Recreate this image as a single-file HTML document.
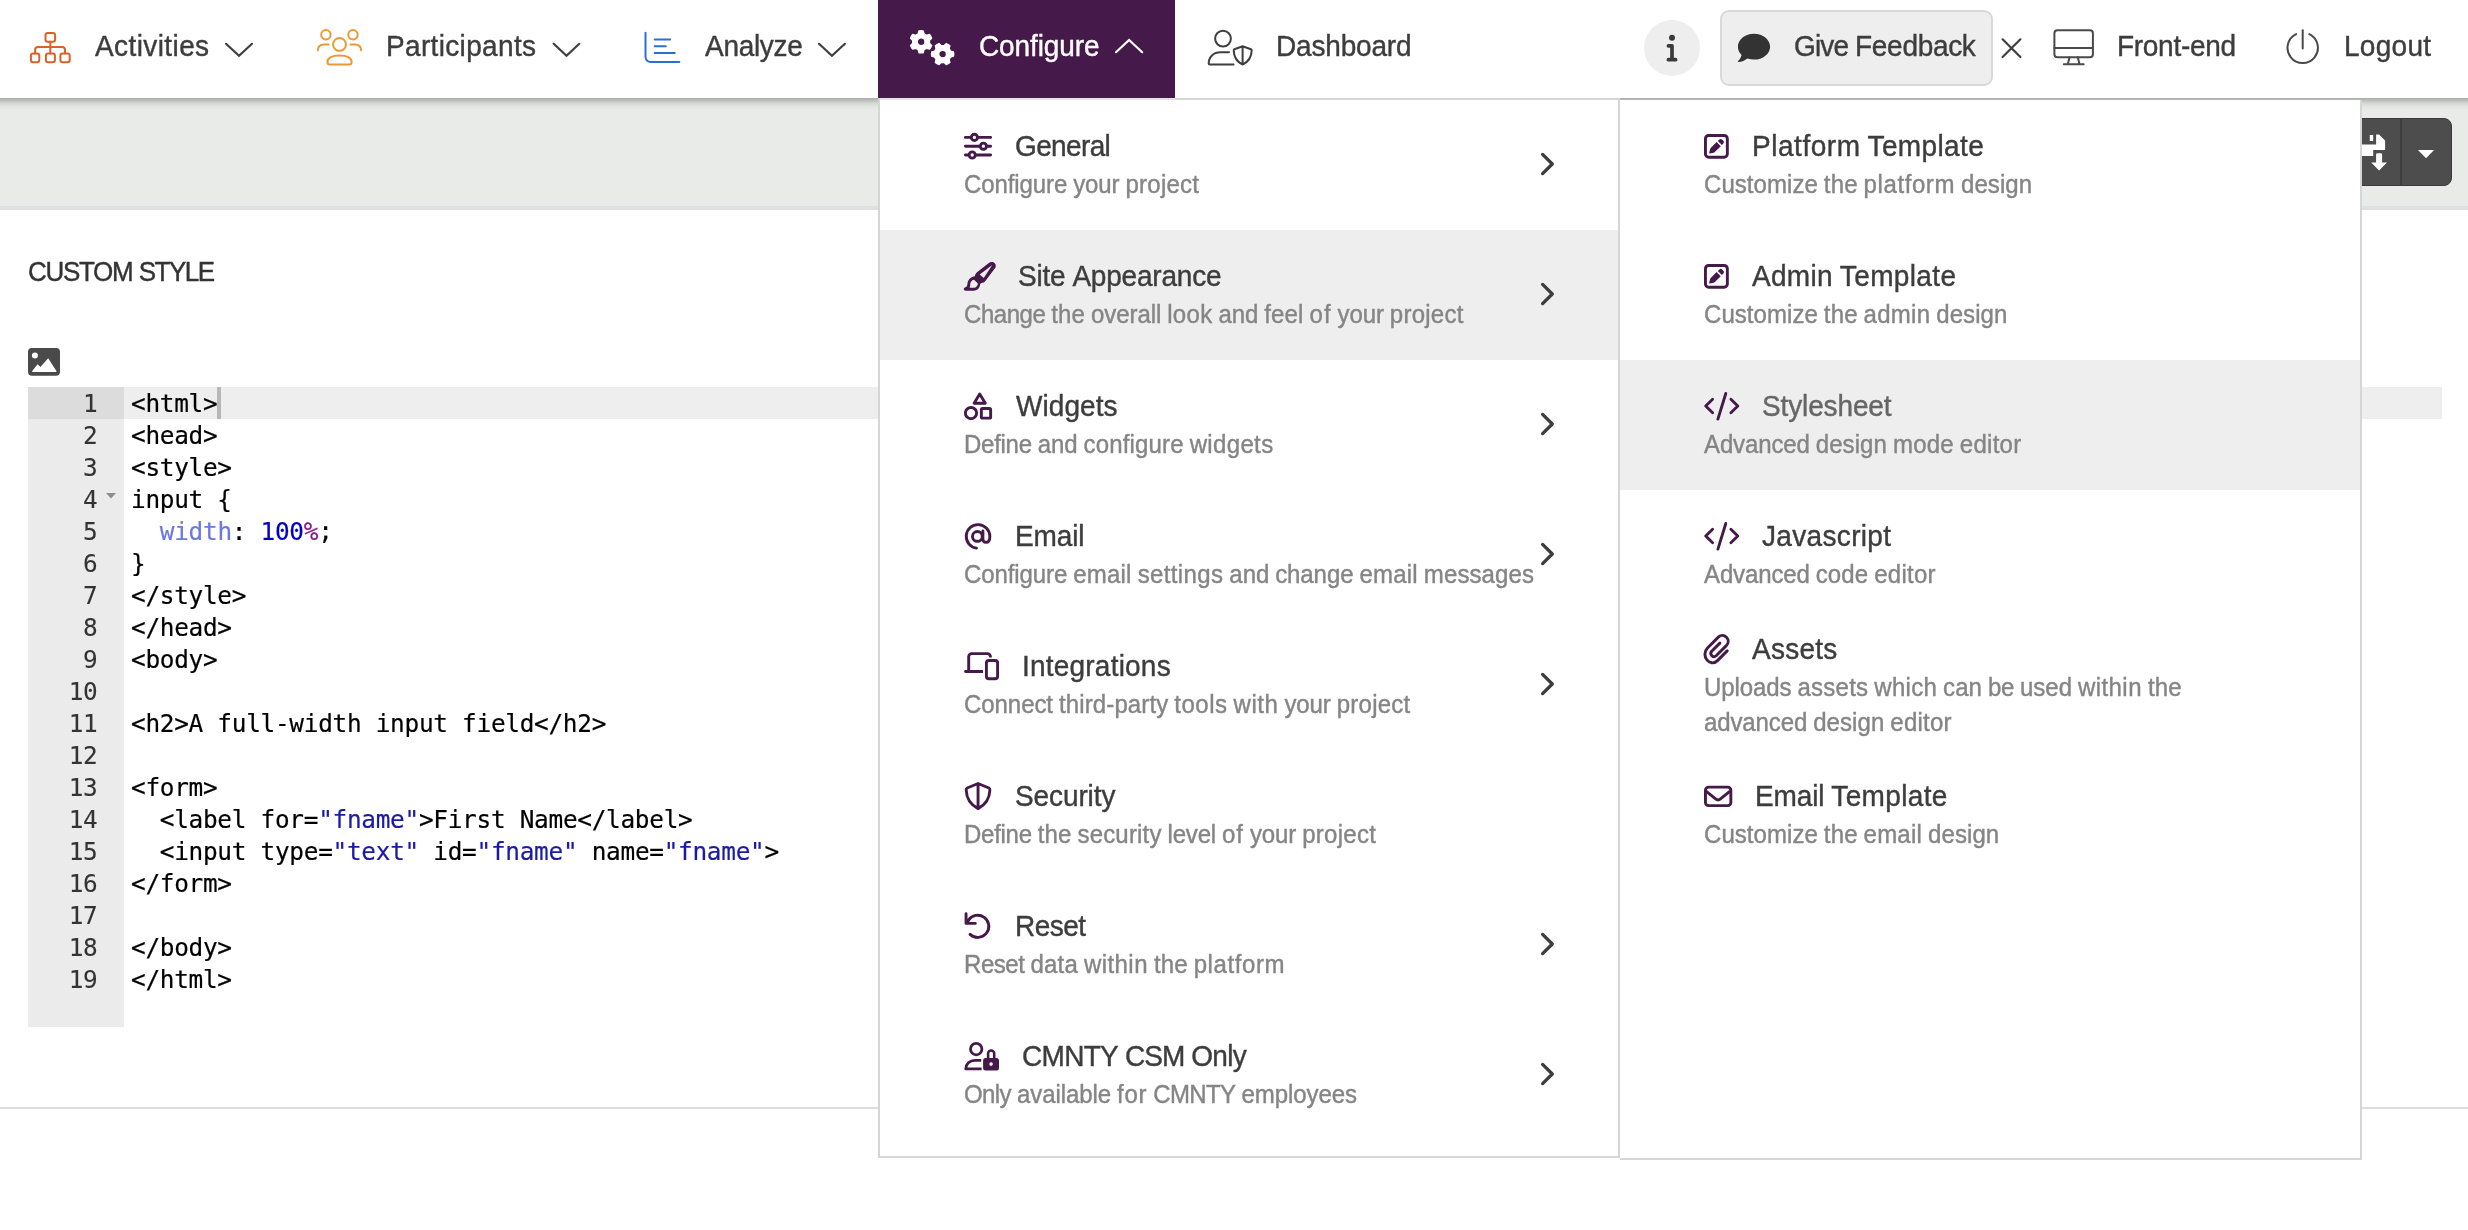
<!DOCTYPE html>
<html lang="en"><head><meta charset="utf-8"><title>Custom style</title>
<style>
html,body{margin:0;padding:0}
body{width:2468px;height:1230px;position:relative;overflow:hidden;background:#fff;font-family:"Liberation Sans",sans-serif;color:#3d3d3d}
.t{position:absolute;white-space:nowrap;line-height:1;will-change:transform;transform:scaleY(1.035);transform-origin:0 84%;-webkit-text-stroke:0.4px currentColor}
.b{position:absolute}
svg{position:absolute;overflow:visible}
.code{position:absolute;white-space:pre;font-family:"DejaVu Sans Mono","Liberation Mono",monospace;font-size:24.4px;letter-spacing:-0.289px;line-height:32px;color:#000;height:32px;will-change:transform;-webkit-text-stroke:0.2px currentColor}
.ln{position:absolute;left:28px;width:69.5px;text-align:right;font-family:"DejaVu Sans Mono","Liberation Mono",monospace;font-size:24.4px;letter-spacing:-0.289px;line-height:32px;color:#333;height:32px;will-change:transform;-webkit-text-stroke:0.1px currentColor}
.s{color:#1a1aa6} .p{color:#6d79de} .n{color:#0000cd} .u{color:#8b1a8b}
</style></head>
<body>

<!-- page background pieces -->
<div class="b" style="left:0;top:98px;width:2468px;height:108px;background:#e9ebe9"></div>
<div class="b" style="left:0;top:206px;width:2468px;height:4px;background:#dfe0e3"></div>
<div class="b" style="left:0;top:98px;width:2468px;height:13px;background:linear-gradient(#acaeac,#b9bbb9 15%,#d2d4d2 38%,#dfe1df 58%,#e6e8e6 77%,#e9ebe9)"></div>
<div class="b" style="left:0;top:1107px;width:2468px;height:2px;background:#dddee1"></div>
<!-- save button on right -->
<div class="b" style="left:2330px;top:118px;width:122px;height:68px;box-sizing:border-box;background:#4d4d4d;border:1.5px solid #3a3a3a;border-radius:8px"></div>
<div class="b" style="left:2400px;top:118px;width:2px;height:68px;background:#3e3e3e"></div>
<div class="b" style="left:28px;top:387px;width:96px;height:640px;background:#ebebeb"></div>
<div class="b" style="left:124px;top:387px;width:2318px;height:32px;background:#eee"></div>
<div class="b" style="left:28px;top:387px;width:96px;height:32px;background:#dcdcdc"></div>
<div class="b" style="left:217.2px;top:387px;width:3.7px;height:32px;background:#b7b7b7"></div>
<div class="ln" style="top:388px">1</div>
<div class="code" style="left:131.3px;top:388px">&lt;html&gt;</div>
<div class="ln" style="top:420px">2</div>
<div class="code" style="left:131.3px;top:420px">&lt;head&gt;</div>
<div class="ln" style="top:452px">3</div>
<div class="code" style="left:131.3px;top:452px">&lt;style&gt;</div>
<div class="ln" style="top:484px">4</div>
<div class="code" style="left:131.3px;top:484px">input {</div>
<div class="ln" style="top:516px">5</div>
<div class="code" style="left:131.3px;top:516px">  <span class="p">width</span>: <span class="n">100</span><span class="u">%</span>;</div>
<div class="ln" style="top:548px">6</div>
<div class="code" style="left:131.3px;top:548px">}</div>
<div class="ln" style="top:580px">7</div>
<div class="code" style="left:131.3px;top:580px">&lt;/style&gt;</div>
<div class="ln" style="top:612px">8</div>
<div class="code" style="left:131.3px;top:612px">&lt;/head&gt;</div>
<div class="ln" style="top:644px">9</div>
<div class="code" style="left:131.3px;top:644px">&lt;body&gt;</div>
<div class="ln" style="top:676px">10</div>
<div class="ln" style="top:708px">11</div>
<div class="code" style="left:131.3px;top:708px">&lt;h2&gt;A full-width input field&lt;/h2&gt;</div>
<div class="ln" style="top:740px">12</div>
<div class="ln" style="top:772px">13</div>
<div class="code" style="left:131.3px;top:772px">&lt;form&gt;</div>
<div class="ln" style="top:804px">14</div>
<div class="code" style="left:131.3px;top:804px">  &lt;label for=<span class="s">"fname"</span>&gt;First Name&lt;/label&gt;</div>
<div class="ln" style="top:836px">15</div>
<div class="code" style="left:131.3px;top:836px">  &lt;input type=<span class="s">"text"</span> id=<span class="s">"fname"</span> name=<span class="s">"fname"</span>&gt;</div>
<div class="ln" style="top:868px">16</div>
<div class="code" style="left:131.3px;top:868px">&lt;/form&gt;</div>
<div class="ln" style="top:900px">17</div>
<div class="ln" style="top:932px">18</div>
<div class="code" style="left:131.3px;top:932px">&lt;/body&gt;</div>
<div class="ln" style="top:964px">19</div>
<div class="code" style="left:131.3px;top:964px">&lt;/html&gt;</div>
<svg style="left:105px;top:492px" width="12" height="8" viewBox="0 0 12 8"><path d="M1 1h10L6 6.5z" fill="#8c8c8c"/></svg>
<!-- nav -->
<div class="b" style="left:0;top:0;width:2468px;height:98px;background:#fff"></div>
<div class="b" style="left:878px;top:0;width:297px;height:98px;background:#45194a"></div>
<div class="b" style="left:1644px;top:20px;width:56px;height:56px;border-radius:50%;background:#eee"></div>
<div class="b" style="left:1720px;top:10px;width:269px;height:72px;border:2px solid #d9d9d9;border-radius:9px;background:#eee"></div>
<!-- dropdown panels -->
<div class="b" style="left:878px;top:98px;width:742px;height:1060px;background:#fff"></div>
<div class="b" style="left:1620px;top:100px;width:742px;height:1060px;background:#fff"></div>
<div class="b" style="left:878px;top:98px;width:742px;height:2px;background:#d6d6d6"></div>
<div class="b" style="left:880px;top:98px;width:295px;height:2px;background:#e3e6e3"></div>
<div class="b" style="left:878px;top:98px;width:2px;height:1060px;background:#d5d5d5"></div>
<div class="b" style="left:878px;top:1156px;width:742px;height:2px;background:#d7d7d7"></div>
<div class="b" style="left:1618px;top:100px;width:2px;height:1058px;background:#d6d6d6"></div>
<div class="b" style="left:2360px;top:100px;width:2px;height:1060px;background:#d6d6d6"></div>
<div class="b" style="left:1620px;top:1158px;width:742px;height:2px;background:#d7d7d7"></div>
<div class="b" style="left:880px;top:230px;width:738px;height:130px;background:#eee"></div>
<div class="b" style="left:1620px;top:360px;width:740px;height:130px;background:#eee"></div>

<div class="t" style="left:95.0px;top:33.2px;font-size:28px;color:#3d3d3d;word-spacing:-0.844px"><span style="letter-spacing:0.406px">Activities</span></div>
<div class="t" style="left:385.8px;top:33.2px;font-size:28px;color:#3d3d3d;word-spacing:-0.844px"><span style="letter-spacing:0.341px">Participants</span></div>
<div class="t" style="left:704.6px;top:33.2px;font-size:28px;color:#3d3d3d;word-spacing:-0.844px"><span style="letter-spacing:-0.297px">Analyze</span></div>
<div class="t" style="left:978.6px;top:33.2px;font-size:28px;color:#fff;word-spacing:-0.844px"><span style="letter-spacing:-0.109px">Configure</span></div>
<div class="t" style="left:1275.6px;top:33.2px;font-size:28px;color:#3d3d3d;word-spacing:-0.844px"><span style="letter-spacing:-0.174px">Dashboard</span></div>
<div class="t" style="left:1793.6px;top:33.2px;font-size:28px;color:#3d3d3d;word-spacing:-0.844px"><span style="letter-spacing:-0.863px">Give</span> <span style="letter-spacing:-0.311px">Feedback</span></div>
<div class="t" style="left:2117.3px;top:33.2px;font-size:28px;color:#3d3d3d;word-spacing:-0.844px"><span style="letter-spacing:-0.292px">Front-end</span></div>
<div class="t" style="left:2343.9px;top:33.2px;font-size:28px;color:#3d3d3d;word-spacing:-0.844px"><span style="letter-spacing:0.284px">Logout</span></div>
<div class="t" style="left:28.1px;top:258.8px;font-size:26px;color:#333;word-spacing:-0.797px"><span style="letter-spacing:-1.326px">CUSTOM</span> <span style="letter-spacing:-1.482px">STYLE</span></div>
<div class="t" style="left:1015.1px;top:133.3px;font-size:28px;color:#3d3d3d;word-spacing:-0.844px"><span style="letter-spacing:-0.629px">General</span></div>
<div class="t" style="left:964.2px;top:172.7px;font-size:24px;color:#858585;word-spacing:-0.719px"><span style="letter-spacing:-0.094px">Configure</span> <span style="letter-spacing:-0.113px">your</span> <span style="letter-spacing:0.272px">project</span></div>
<div class="t" style="left:1017.8px;top:263.3px;font-size:28px;color:#3d3d3d;word-spacing:-0.844px"><span style="letter-spacing:-0.199px">Site</span> <span style="letter-spacing:-0.208px">Appearance</span></div>
<div class="t" style="left:964.2px;top:302.7px;font-size:24px;color:#858585;word-spacing:-0.719px"><span style="letter-spacing:-0.453px">Change</span> <span style="letter-spacing:0.141px">the</span> <span style="letter-spacing:-0.085px">overall</span> <span style="letter-spacing:0.336px">look</span> <span style="letter-spacing:-0.068px">and</span> <span style="letter-spacing:0.164px">feel</span> <span style="letter-spacing:1.008px">of</span> <span style="letter-spacing:-0.113px">your</span> <span style="letter-spacing:0.272px">project</span></div>
<div class="t" style="left:1015.5px;top:393.3px;font-size:28px;color:#3d3d3d;word-spacing:-0.844px"><span style="letter-spacing:0.067px">Widgets</span></div>
<div class="t" style="left:964.0px;top:432.7px;font-size:24px;color:#858585;word-spacing:-0.719px"><span style="letter-spacing:-0.268px">Define</span> <span style="letter-spacing:-0.068px">and</span> <span style="letter-spacing:0.158px">configure</span> <span style="letter-spacing:0.355px">widgets</span></div>
<div class="t" style="left:1014.8px;top:523.3px;font-size:28px;color:#3d3d3d;word-spacing:-0.844px"><span style="letter-spacing:-0.138px">Email</span></div>
<div class="t" style="left:964.2px;top:562.7px;font-size:24px;color:#858585;word-spacing:-0.719px"><span style="letter-spacing:-0.094px">Configure</span> <span style="letter-spacing:0.228px">email</span> <span style="letter-spacing:0.383px">settings</span> <span style="letter-spacing:-0.068px">and</span> <span style="letter-spacing:-0.076px">change</span> <span style="letter-spacing:0.228px">email</span> <span style="letter-spacing:0.102px">messages</span></div>
<div class="t" style="left:1021.7px;top:653.3px;font-size:28px;color:#3d3d3d;word-spacing:-0.844px"><span style="letter-spacing:0.210px">Integrations</span></div>
<div class="t" style="left:964.2px;top:692.7px;font-size:24px;color:#858585;word-spacing:-0.719px"><span style="letter-spacing:-0.060px">Connect</span> <span style="letter-spacing:0.128px">third-party</span> <span style="letter-spacing:0.503px">tools</span> <span style="letter-spacing:0.566px">with</span> <span style="letter-spacing:-0.113px">your</span> <span style="letter-spacing:0.272px">project</span></div>
<div class="t" style="left:1014.6px;top:783.3px;font-size:28px;color:#3d3d3d;word-spacing:-0.844px"><span style="letter-spacing:-0.109px">Security</span></div>
<div class="t" style="left:964.0px;top:822.7px;font-size:24px;color:#858585;word-spacing:-0.719px"><span style="letter-spacing:-0.268px">Define</span> <span style="letter-spacing:0.141px">the</span> <span style="letter-spacing:0.176px">security</span> <span style="letter-spacing:-0.181px">level</span> <span style="letter-spacing:1.008px">of</span> <span style="letter-spacing:-0.113px">your</span> <span style="letter-spacing:0.272px">project</span></div>
<div class="t" style="left:1014.8px;top:913.3px;font-size:28px;color:#3d3d3d;word-spacing:-0.844px"><span style="letter-spacing:-0.519px">Reset</span></div>
<div class="t" style="left:964.0px;top:952.7px;font-size:24px;color:#858585;word-spacing:-0.719px"><span style="letter-spacing:-0.444px">Reset</span> <span style="letter-spacing:0.195px">data</span> <span style="letter-spacing:0.445px">within</span> <span style="letter-spacing:0.141px">the</span> <span style="letter-spacing:0.592px">platform</span></div>
<div class="t" style="left:1022.0px;top:1043.3px;font-size:28px;color:#3d3d3d;word-spacing:-0.844px"><span style="letter-spacing:-0.709px">CMNTY</span> <span style="letter-spacing:-0.979px">CSM</span> <span style="letter-spacing:-0.695px">Only</span></div>
<div class="t" style="left:964.3px;top:1082.7px;font-size:24px;color:#858585;word-spacing:-0.719px"><span style="letter-spacing:-0.598px">Only</span> <span style="letter-spacing:-0.064px">available</span> <span style="letter-spacing:0.719px">for</span> <span style="letter-spacing:-0.609px">CMNTY</span> <span style="letter-spacing:-0.047px">employees</span></div>
<div class="t" style="left:1751.5px;top:133.3px;font-size:28px;color:#3d3d3d;word-spacing:-0.844px"><span style="letter-spacing:0.545px">Platform</span> <span style="letter-spacing:0.363px">Template</span></div>
<div class="t" style="left:1704.2px;top:172.7px;font-size:24px;color:#858585;word-spacing:-0.719px"><span style="letter-spacing:0.056px">Customize</span> <span style="letter-spacing:0.141px">the</span> <span style="letter-spacing:0.592px">platform</span> <span style="letter-spacing:0.081px">design</span></div>
<div class="t" style="left:1751.8px;top:263.3px;font-size:28px;color:#3d3d3d;word-spacing:-0.844px"><span style="letter-spacing:0.303px">Admin</span> <span style="letter-spacing:0.363px">Template</span></div>
<div class="t" style="left:1704.2px;top:302.7px;font-size:24px;color:#858585;word-spacing:-0.719px"><span style="letter-spacing:0.056px">Customize</span> <span style="letter-spacing:0.141px">the</span> <span style="letter-spacing:0.272px">admin</span> <span style="letter-spacing:0.081px">design</span></div>
<div class="t" style="left:1761.9px;top:393.3px;font-size:28px;color:#666;word-spacing:-0.844px"><span style="letter-spacing:-0.133px">Stylesheet</span></div>
<div class="t" style="left:1704.3px;top:432.7px;font-size:24px;color:#858585;word-spacing:-0.719px"><span style="letter-spacing:-0.121px">Advanced</span> <span style="letter-spacing:0.081px">design</span> <span style="letter-spacing:0.238px">mode</span> <span style="letter-spacing:0.250px">editor</span></div>
<div class="t" style="left:1762.4px;top:523.3px;font-size:28px;color:#3d3d3d;word-spacing:-0.844px"><span style="letter-spacing:0.331px">Javascript</span></div>
<div class="t" style="left:1704.3px;top:562.7px;font-size:24px;color:#858585;word-spacing:-0.719px"><span style="letter-spacing:-0.121px">Advanced</span> <span style="letter-spacing:0.117px">code</span> <span style="letter-spacing:0.250px">editor</span></div>
<div class="t" style="left:1751.8px;top:636.3px;font-size:28px;color:#3d3d3d;word-spacing:-0.844px"><span style="letter-spacing:0.268px">Assets</span></div>
<div class="t" style="left:1703.8px;top:675.7px;font-size:24px;color:#858585;word-spacing:-0.719px"><span style="letter-spacing:-0.074px">Uploads</span> <span style="letter-spacing:0.237px">assets</span> <span style="letter-spacing:0.303px">which</span> <span style="letter-spacing:0.057px">can</span> <span style="letter-spacing:-0.250px">be</span> <span style="letter-spacing:-0.039px">used</span> <span style="letter-spacing:0.445px">within</span> <span style="letter-spacing:0.141px">the</span></div>
<div class="t" style="left:1704.3px;top:710.7px;font-size:24px;color:#858585;word-spacing:-0.719px"><span style="letter-spacing:-0.115px">advanced</span> <span style="letter-spacing:0.081px">design</span> <span style="letter-spacing:0.250px">editor</span></div>
<div class="t" style="left:1755.0px;top:783.3px;font-size:28px;color:#3d3d3d;word-spacing:-0.844px"><span style="letter-spacing:-0.138px">Email</span> <span style="letter-spacing:0.363px">Template</span></div>
<div class="t" style="left:1704.2px;top:822.7px;font-size:24px;color:#858585;word-spacing:-0.719px"><span style="letter-spacing:0.056px">Customize</span> <span style="letter-spacing:0.141px">the</span> <span style="letter-spacing:0.228px">email</span> <span style="letter-spacing:0.081px">design</span></div>
<svg style="left:0;top:0" width="2468" height="1230" viewBox="0 0 2468 1230">
<g stroke="#d9622b" stroke-width="2" fill="none" stroke-linecap="round" stroke-linejoin="round">
<rect x="45.5" y="33" width="9.6" height="8.7" rx="2.2"/>
<rect x="30.9" y="53.4" width="8.4" height="8.8" rx="2.2"/>
<rect x="45.9" y="53.4" width="9" height="8.8" rx="2.2"/>
<rect x="60.4" y="53.4" width="9.3" height="8.8" rx="2.2"/>
<path d="M50.3 41.7V53.4M35.1 53.4V50a3 3 0 0 1 3-3H62a3 3 0 0 1 3 3V53.4"/></g>
<path d="M226 43.8 L239.0 55.699999999999996 L252 43.8" stroke="#3f3f3f" stroke-width="2.2" fill="none" stroke-linecap="round" stroke-linejoin="miter"/>
<g stroke="#ea9a34" stroke-width="2" fill="none" stroke-linecap="round" stroke-linejoin="round">
<circle cx="325.9" cy="34.8" r="4.7"/><circle cx="353" cy="34.8" r="4.7"/><circle cx="339.5" cy="44.4" r="6.4"/>
<path d="M317.9 50.3C318 46.6 320.6 44.6 324 44.6H328.6M361.1 50.3C361 46.6 358.4 44.6 355 44.6H350.4"/>
<path d="M327.4 62C327.4 58 332 55.4 339.5 55.4S351.6 58 351.6 62a2.5 2.5 0 0 1-2.5 2.5H329.9a2.5 2.5 0 0 1-2.5-2.5z"/></g>
<path d="M553.7 43.8 L566.5 55.699999999999996 L579.3 43.8" stroke="#3f3f3f" stroke-width="2.2" fill="none" stroke-linecap="round" stroke-linejoin="miter"/>
<g stroke="#2c6fd3" stroke-width="2" fill="none" stroke-linecap="round" stroke-linejoin="round">
<path d="M645.5 32.8V57a5 5 0 0 0 5 5H679.3"/>
<path d="M654.7 39.6H670.2M654.7 46.2H665.8M654.7 53.1H674.8"/></g>
<path d="M819 43.8 L831.95 55.699999999999996 L844.9 43.8" stroke="#3f3f3f" stroke-width="2.2" fill="none" stroke-linecap="round" stroke-linejoin="miter"/>
<path d="M924.03 49.67L923.18 52.70A11.10 11.10 0 0 1 919.02 52.70L918.17 49.67A8.40 8.40 0 0 1 915.75 48.27L912.70 49.05A11.10 11.10 0 0 1 910.62 45.45L912.82 43.20A8.40 8.40 0 0 1 912.82 40.40L910.62 38.15A11.10 11.10 0 0 1 912.70 34.55L915.75 35.33A8.40 8.40 0 0 1 918.17 33.93L919.02 30.90A11.10 11.10 0 0 1 923.18 30.90L924.03 33.93A8.40 8.40 0 0 1 926.45 35.33L929.50 34.55A11.10 11.10 0 0 1 931.58 38.15L929.38 40.40A8.40 8.40 0 0 1 929.38 43.20L931.58 45.45A11.10 11.10 0 0 1 929.50 49.05L926.45 48.27A8.40 8.40 0 0 1 924.03 49.67ZM925.00 41.80A3.9 3.9 0 1 0 917.20 41.80A3.9 3.9 0 1 0 925.00 41.80ZM950.47 51.17L953.50 52.02A11.10 11.10 0 0 1 953.50 56.18L950.47 57.03A8.40 8.40 0 0 1 949.07 59.45L949.85 62.50A11.10 11.10 0 0 1 946.25 64.58L944.00 62.38A8.40 8.40 0 0 1 941.20 62.38L938.95 64.58A11.10 11.10 0 0 1 935.35 62.50L936.13 59.45A8.40 8.40 0 0 1 934.73 57.03L931.70 56.18A11.10 11.10 0 0 1 931.70 52.02L934.73 51.17A8.40 8.40 0 0 1 936.13 48.75L935.35 45.70A11.10 11.10 0 0 1 938.95 43.62L941.20 45.82A8.40 8.40 0 0 1 944.00 45.82L946.25 43.62A11.10 11.10 0 0 1 949.85 45.70L949.07 48.75A8.40 8.40 0 0 1 950.47 51.17ZM946.50 54.10A3.9 3.9 0 1 0 938.70 54.10A3.9 3.9 0 1 0 946.50 54.10Z" fill="#fff" fill-rule="evenodd" stroke="#fff" stroke-width="1.4" stroke-linejoin="round"/>
<path d="M1116 52.2 L1129.1 39.9 L1142.2 52.2" stroke="#fff" stroke-width="2.2" fill="none" stroke-linecap="round"/>
<g stroke="#3f3f3f" stroke-width="2" fill="none" stroke-linecap="round" stroke-linejoin="round">
<circle cx="1223" cy="38.6" r="7.9"/>
<path d="M1229 52.3H1220.5C1213.5 52.3 1208.7 57 1208.7 63.5a1 1 0 0 0 1 1H1233.5"/>
<path d="M1242.6 46.3L1234.4 49.3C1233.9 49.5 1233.7 49.9 1233.7 50.4C1233.9 57 1237.2 62 1242.6 64.6C1248 62 1251.5 57 1251.7 50.4C1251.7 49.9 1251.4 49.5 1250.9 49.3ZM1242.6 46.3V64.6"/></g>
<circle cx="1672" cy="37.8" r="3" fill="#3b3b3b"/><path d="M1668.4 45.8H1672V59.7M1668.4 59.7H1675.6" stroke="#3b3b3b" stroke-width="3.7" fill="none" stroke-linecap="round" stroke-linejoin="round"/>
<path d="M1754 33.8C1762.9 33.8 1770.1 39.6 1770.1 46.7S1762.9 59.6 1754 59.6C1751.6 59.6 1749.4 59.2 1747.4 58.5C1745 60.5 1741.8 61.9 1738.3 61.9C1737.8 61.9 1737.7 61.4 1738 61.1C1739.5 59.6 1741 57.4 1741.6 54.9C1739.3 52.7 1737.9 49.8 1737.9 46.7C1737.9 39.6 1745.1 33.8 1754 33.8Z" fill="#333"/>
<path d="M2002.6 39.3L2020.4 57M2020.4 39.3L2002.6 57" stroke="#3f3f3f" stroke-width="2.2" fill="none" stroke-linecap="round"/>
<g stroke="#4a4a4a" stroke-width="2" fill="none" stroke-linecap="round" stroke-linejoin="round">
<rect x="2054.4" y="30.3" width="38.5" height="26.9" rx="3"/>
<path d="M2054.4 47.9H2092.9M2069.5 57.2L2067.8 64.3M2077.8 57.2L2079.5 64.3M2063.8 64.3H2083.7"/></g>
<g stroke="#4a4a4a" stroke-width="2" fill="none" stroke-linecap="round">
<path d="M2302.7 30.3V48.5"/>
<path d="M2309.3 34.1A15.2 15.2 0 1 1 2296.1 34.1"/></g>
<g stroke="#45194a" stroke-width="2.9" fill="none" stroke-linecap="round"><path d="M965.4 137.4H970.0M978.8 137.4H990.6" /><circle cx="974.4" cy="137.4" r="3.1"/><path d="M965.4 146.2H979.0M987.8 146.2H990.6" /><circle cx="983.4" cy="146.2" r="3.1"/><path d="M965.4 155H967.8000000000001M976.6 155H990.6" /><circle cx="972.2" cy="155" r="3.1"/></g>
<path fill="#45194a" fill-rule="evenodd" d="M991.9 262C994.6 262 996.6 264.6 995.5 267.4L985.6 280.7C984.5 282.1 983 282.9 981.6 283C980.6 283.4 980.2 284 980 285C979.5 288.5 977 290.65 973.5 290.65H965.6C964.5 290.65 963.8 289.9 963.8 289C963.8 288 964.5 287.5 965.4 287.2C967 286.8 967.3 285.5 967.4 284C967.8 279.5 971 276.8 974.8 276.3C975 274.8 975.6 273.5 977 272.3L988.5 263.2C989.5 262.4 990.7 262 991.9 262Z
M992.3 265.1L979.7 274.5L983.7 278.1Z
M974 279.7C971.5 280.2 970.3 282 970.2 284.5C970.1 286 970 287 969.6 287.8H974C976 287.8 977.6 286.3 977.9 283.6Z"/>
<g stroke="#45194a" stroke-width="2.9" fill="none" stroke-linejoin="round">
<path d="M979.7 393.9L985.3 403.3H974.1Z"/><circle cx="971" cy="413.1" r="5.65"/><rect x="981.35" y="408.45" width="9.3" height="9.7" rx="1.2"/></g>
<g stroke="#45194a" stroke-width="2.9" fill="none" stroke-linecap="round" stroke-linejoin="round">
<circle cx="977.4" cy="536.4" r="4.9"/>
<path d="M982.9 531V539C982.9 541.3 984.2 542.3 986 542.3C988.5 542.3 989.85 540 989.85 536.4A11.8 11.8 0 1 0 976.5 548.1"/></g>
<g stroke="#45194a" stroke-width="2.9" fill="none" stroke-linejoin="round">
<path d="M968.7 671V656.6a3 3 0 0 1 3-3H987.4a3 3 0 0 1 3 3V657.6"/>
<path d="M965.5 671.5H981.4" stroke-linecap="round"/><path d="M975 671.5H983"/>
<rect x="986.4" y="660.5" width="11.2" height="18.3" rx="2.6"/></g>
<g stroke="#45194a" stroke-width="2.9" fill="none" stroke-linejoin="round">
<path d="M978.05 783.5L967.2 788C966.5 788.3 966.2 789 966.2 790C966.5 798 971 805 978.05 808.6C985.1 805 989.6 798 989.9 790C989.9 789 989.6 788.3 988.9 788ZM978.05 783.5V808.6"/></g>
<g stroke="#45194a" stroke-width="2.9" fill="none" stroke-linecap="round" stroke-linejoin="round">
<path d="M968.3 920.5A11.1 11.1 0 1 1 970.06 934.35"/><path d="M966.05 913.7V923.4H975.3"/></g>
<path d="M966 917L970.6 923.4H966Z" fill="#45194a"/>
<g stroke="#45194a" stroke-width="2.8" fill="none" stroke-linejoin="round">
<circle cx="976.2" cy="1049.1" r="5.7"/>
<path d="M981.2 1060.3H975C969.5 1060.3 965.8 1064 965.8 1068.9H981.6"/>
<path d="M988.1 1059V1053.5a3.05 3.05 0 0 1 6.1 0V1059" stroke-width="2.6"/></g>
<path fill-rule="evenodd" fill="#45194a" d="M985.6 1058H996.5A2.5 2.5 0 0 1 999 1060.5V1067.9A2.5 2.5 0 0 1 996.5 1070.4H985.6A2.5 2.5 0 0 1 983.1 1067.9V1060.5A2.5 2.5 0 0 1 985.6 1058ZM992.85 1064.1A1.8 1.8 0 1 0 989.25 1064.1A1.8 1.8 0 1 0 992.85 1064.1Z"/>
<path d="M1542.6 154.4 L1552.3 164 L1542.6 173.6" stroke="#3d3d3d" stroke-width="3.3" fill="none" stroke-linecap="round" stroke-linejoin="round"/>
<path d="M1542.6 284.4 L1552.3 294 L1542.6 303.6" stroke="#3d3d3d" stroke-width="3.3" fill="none" stroke-linecap="round" stroke-linejoin="round"/>
<path d="M1542.6 414.4 L1552.3 424 L1542.6 433.6" stroke="#3d3d3d" stroke-width="3.3" fill="none" stroke-linecap="round" stroke-linejoin="round"/>
<path d="M1542.6 544.4 L1552.3 554 L1542.6 563.6" stroke="#3d3d3d" stroke-width="3.3" fill="none" stroke-linecap="round" stroke-linejoin="round"/>
<path d="M1542.6 674.4 L1552.3 684 L1542.6 693.6" stroke="#3d3d3d" stroke-width="3.3" fill="none" stroke-linecap="round" stroke-linejoin="round"/>
<path d="M1542.6 934.4 L1552.3 944 L1542.6 953.6" stroke="#3d3d3d" stroke-width="3.3" fill="none" stroke-linecap="round" stroke-linejoin="round"/>
<path d="M1542.6 1064.4 L1552.3 1074 L1542.6 1083.6" stroke="#3d3d3d" stroke-width="3.3" fill="none" stroke-linecap="round" stroke-linejoin="round"/>
<g transform="translate(0 0)"><rect x="1705.45" y="135.45" width="21.9" height="21.75" rx="3.2" stroke="#45194a" stroke-width="2.9" fill="none"/>
<path fill="#45194a" d="M1716.6 142.1L1720.8 146.2L1714.6 152.2C1714.3 152.5 1714 152.6 1713.6 152.7L1709.9 153.5C1709.4 153.6 1709.1 153.2 1709.2 152.8L1710.1 149C1710.2 148.6 1710.4 148.3 1710.7 148ZM1717.8 140.9L1719.4 139.4C1720.2 138.7 1721.3 138.7 1722 139.4L1723.4 140.8C1724.1 141.6 1724.1 142.7 1723.4 143.4L1721.9 145Z"/></g>
<g transform="translate(0 130)"><rect x="1705.45" y="135.45" width="21.9" height="21.75" rx="3.2" stroke="#45194a" stroke-width="2.9" fill="none"/>
<path fill="#45194a" d="M1716.6 142.1L1720.8 146.2L1714.6 152.2C1714.3 152.5 1714 152.6 1713.6 152.7L1709.9 153.5C1709.4 153.6 1709.1 153.2 1709.2 152.8L1710.1 149C1710.2 148.6 1710.4 148.3 1710.7 148ZM1717.8 140.9L1719.4 139.4C1720.2 138.7 1721.3 138.7 1722 139.4L1723.4 140.8C1724.1 141.6 1724.1 142.7 1723.4 143.4L1721.9 145Z"/></g>
<g transform="translate(0 0)" stroke="#45194a" stroke-width="2.9" fill="none" stroke-linecap="round" stroke-linejoin="round">
<path d="M1712.6 399.3L1705.7 406L1712.6 412.7M1725.8 393.5L1717.9 419.1M1730.9 399.3L1737.8 406L1730.9 412.7"/></g>
<g transform="translate(0 130)" stroke="#45194a" stroke-width="2.9" fill="none" stroke-linecap="round" stroke-linejoin="round">
<path d="M1712.6 399.3L1705.7 406L1712.6 412.7M1725.8 393.5L1717.9 419.1M1730.9 399.3L1737.8 406L1730.9 412.7"/></g>
<path d="M1719.9 643.1L1711.7 651.3A3.15 3.15 0 0 0 1716.15 655.75L1726.55 645.35A5.8 5.8 0 0 0 1718.35 637.15L1707.5 648C1700.1 655.4 1710.1 668 1717.5 660.6L1727.2 650.9" stroke="#45194a" stroke-width="2.9" fill="none" stroke-linecap="round" stroke-linejoin="round"/>
<g stroke="#45194a" stroke-width="2.9" fill="none" stroke-linejoin="round">
<rect x="1705.45" y="787.1" width="25.4" height="18.5" rx="3.2"/>
<path d="M1706 791.2L1715.6 798.9C1717 800.1 1719.1 800.1 1720.5 798.9L1730.1 791.2"/></g>
<path fill-rule="evenodd" fill="#4a4a4a" d="M32 348H56A4 4 0 0 1 60 352V371.8A4 4 0 0 1 56 375.8H32A4 4 0 0 1 28 371.8V352A4 4 0 0 1 32 348Z
M37.9 355.5A3 3 0 1 0 31.9 355.5A3 3 0 1 0 37.9 355.5Z
M32.2 372L32.2 371L37.6 364.2L40.4 367L48.2 358.2L56.4 371V372Z"/>
<path fill="#fff" d="M2362 144.4H2376.1V134.6H2379L2385.1 140.5V150H2373.2V156.1H2362ZM2369.8 134.9H2373.2V141H2369.8ZM2376.1 154.4a1.2 1.2 0 0 1 1.2-1.2H2380.9a1.2 1.2 0 0 1 1.2 1.2V162.4H2387L2379.1 170.4L2371.2 162.4H2376.1ZM2418 150H2434.1L2426.05 158.2Z"/>
</svg>
</body></html>
